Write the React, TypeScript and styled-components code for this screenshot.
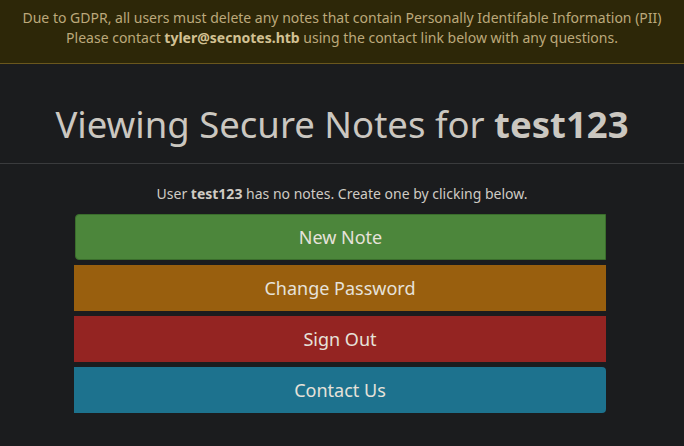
import styled, { createGlobalStyle } from "styled-components";

const GlobalStyle = createGlobalStyle`
  html, body {
    margin: 0;
    padding: 0;
    background: #1b1c1e;
    font-family: "Noto Sans", "Open Sans", sans-serif;
  }
`;

type Variant = "green" | "orange" | "red" | "blue";

const colors: Record<Variant, string> = {
  green: "#4c863b",
  orange: "#995f0e",
  red: "#942422",
  blue: "#1d728e",
};

const radii: Record<Variant, string> = {
  green: "4px 0 0 4px",
  orange: "0",
  red: "0",
  blue: "0 4px 4px 0",
};

const actions: { label: string; variant: Variant }[] = [
  { label: "New Note", variant: "green" },
  { label: "Change Password", variant: "orange" },
  { label: "Sign Out", variant: "red" },
  { label: "Contact Us", variant: "blue" },
];

export default function App() {
  return (
    <>
      <GlobalStyle />
      <Page>
        <Banner>
          Due to GDPR, all users must delete any notes that contain Personally Identifable Information (PII)
          <br />
          Please contact <b>tyler@secnotes.htb</b> using the contact link below with any questions.
        </Banner>
        <Title>
          Viewing Secure Notes for <b>test123</b>
        </Title>
        <Divider />
        <Notice>
          User <b>test123</b> has no notes. Create one by clicking below.
        </Notice>
        <Actions>
          {actions.map((a) => (
            <ActionButton key={a.label} $variant={a.variant}>
              {a.label}
            </ActionButton>
          ))}
        </Actions>
      </Page>
    </>
  );
}

const Page = styled.div`
  min-height: 100vh;
  background: #1b1c1e;
  color: #cfcac2;
`;

const Banner = styled.div`
  background: #2d2708;
  border-bottom: 1px solid #6a571d;
  color: #bca97b;
  font-size: 14px;
  line-height: 20px;
  text-align: center;
  padding: 8px 0 15px;

  b {
    color: #d2c193;
  }
`;

const Title = styled.h1`
  margin: 0;
  padding: 40px 0 19px;
  font-size: 36.5px;
  font-weight: normal;
  line-height: 40px;
  text-align: center;
  color: #cbc7c0;

  b {
    font-weight: bold;
  }
`;

const Divider = styled.hr`
  margin: 0;
  border: none;
  border-top: 1px solid #3a3b3d;
`;

const Notice = styled.p`
  margin: 20px 0 10px;
  font-size: 14px;
  line-height: 20px;
  text-align: center;
  color: #cfcbc4;
`;

const Actions = styled.div`
  width: 532px;
  margin-left: 74px;
  display: flex;
  flex-direction: column;
  gap: 5px;
`;

const ActionButton = styled.button<{ $variant: Variant }>`
  height: 46px;
  border: ${(p) => (p.$variant === "green" ? "1px solid #3a6d2c" : "none")};
  margin-left: ${(p) => (p.$variant === "green" ? "1px" : "0")};
  border-radius: ${(p) => radii[p.$variant]};
  background: ${(p) => colors[p.$variant]};
  color: #e6e2da;
  font-family: "Noto Sans", sans-serif;
  font-size: 18px;
  cursor: pointer;
`;
